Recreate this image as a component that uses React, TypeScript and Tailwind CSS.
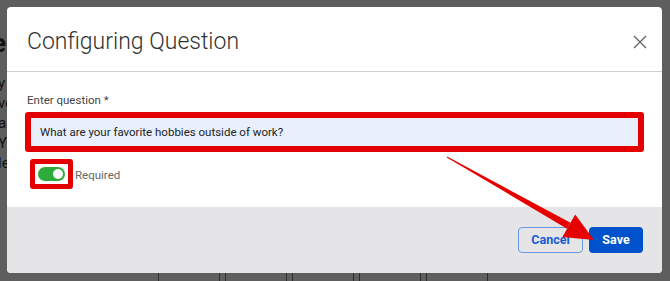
import { useState } from "react";

export default function App() {
  const [question, setQuestion] = useState("What are your favorite hobbies outside of work?");
  const [required, setRequired] = useState(true);

  return (
    <div className="relative w-[670px] h-[281px] overflow-hidden bg-white font-['Roboto',sans-serif]">
      {/* page behind the modal */}
      <div className="flex flex-col pt-[28px] text-[#333]">
        <div className="text-[26px] font-bold leading-[30px] -ml-[8px]">e</div>
        <div className="flex flex-col gap-[2px] pt-[16px] text-[15px] leading-[18px] -ml-[2px]">
          <span>y</span>
          <span>ve</span>
          <span>a</span>
          <span>Y(</span>
          <span>le</span>
        </div>
        <div className="flex gap-[5px] pl-[158px] pt-[84px]">
          {[0, 1, 2, 3, 4].map(i => (
            <div key={i} className="w-[62px] h-[30px] border-x border-[#777]" />
          ))}
        </div>
      </div>

      {/* backdrop */}
      <div className="absolute inset-0 bg-black/[0.63]" />

      {/* modal */}
      <div className="absolute left-[7px] top-[7px] w-[655px] h-[266px] bg-white rounded-[4px] flex flex-col overflow-hidden">
        <div className="h-[65px] flex items-center justify-between pl-[20px] pr-[12px] pt-[6px] border-b-[1.5px] border-[#cfcfcf]">
          <h2 className="text-[23px] font-light text-[#333]">Configuring Question</h2>
          <button className="w-[20px] h-[20px] flex items-center justify-center text-[#666]">
            <svg width="14" height="14" viewBox="0 0 14 14" fill="none" stroke="currentColor" strokeWidth="1.4">
              <path d="M1 1L13 13M13 1L1 13" />
            </svg>
          </button>
        </div>

        <div className="flex-1 flex flex-col px-[18px] pt-[20px]">
          <label className="pl-[2px] text-[11.5px] leading-[16px] text-[#444]">Enter question *</label>
          <div className="mt-[4px] border-[6px] border-[#e40000] rounded-[3px]">
            <input
              value={question}
              onChange={e => setQuestion(e.target.value)}
              className="w-full h-[28px] px-[9px] bg-[#e8f0fe] text-[11.5px] text-[#222] outline-none"
            />
          </div>
          <div className="mt-[7px] ml-[5px] flex items-center gap-[2px]">
            <div className="border-[5px] border-[#e40000] rounded-[3px] p-[3px] bg-white">
              <button
                onClick={() => setRequired(!required)}
                className={`w-[27px] h-[14px] rounded-full flex items-center px-[2px] ${required ? "bg-[#2eab3c] justify-end" : "bg-[#bbb] justify-start"}`}
              >
                <span className="w-[10px] h-[10px] rounded-full bg-white" />
              </button>
            </div>
            <span className="pt-[3px] text-[11.5px] text-[#666]">Required</span>
          </div>
        </div>

        <div className="h-[66px] bg-[#e5e5e7] flex items-center justify-end gap-[6px] pr-[19px]">
          <button className="w-[65px] h-[26px] rounded-[4px] border border-[#6a98e0] text-[12.5px] font-bold text-[#1a5bd0]">Cancel</button>
          <button className="w-[54px] h-[26px] rounded-[4px] bg-[#0052cc] text-[12.5px] font-bold text-white">Save</button>
        </div>
      </div>

      {/* annotation arrow */}
      <svg className="absolute inset-0 pointer-events-none" width="670" height="281" viewBox="0 0 670 281">
        <polygon points="447.2,156.6 446.8,157.4 567.1,228.7 570.5,222.7" fill="#e60000" />
        <polygon points="575.2,214.4 562.4,237 594,240" fill="#e60000" />
      </svg>
    </div>
  );
}
